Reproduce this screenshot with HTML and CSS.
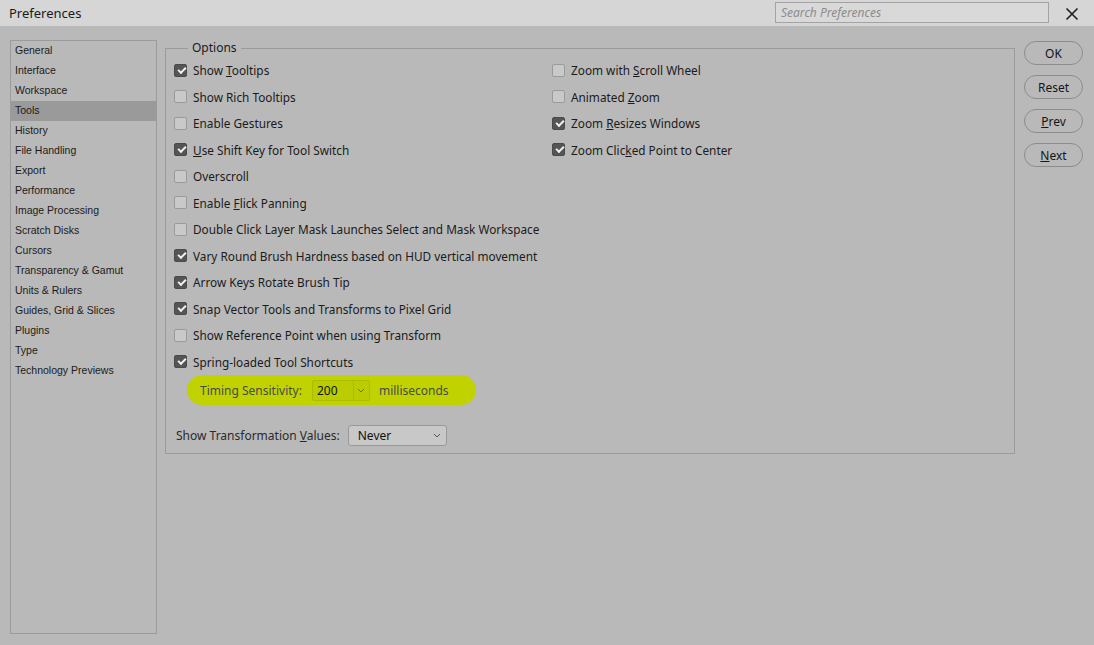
FILE: index.html
```html
<!DOCTYPE html>
<html>
<head>
<meta charset="utf-8">
<link rel="stylesheet" href="styles.css">
</head>
<body>
<div class="window">
  <div class="titlebar">
    <div class="title">Preferences</div>
    <div class="search">Search Preferences</div>
    <div class="close">
      <svg width="14" height="14" viewBox="0 0 14 14"><path d="M1.5 1.5 L12.5 12.5 M12.5 1.5 L1.5 12.5" stroke="#1e1e1e" stroke-width="1.6" fill="none"/></svg>
    </div>
  </div>
  <div class="main">
    <ul class="sidebar">
      <li>General</li>
      <li>Interface</li>
      <li>Workspace</li>
      <li class="selected">Tools</li>
      <li>History</li>
      <li>File Handling</li>
      <li>Export</li>
      <li>Performance</li>
      <li>Image Processing</li>
      <li>Scratch Disks</li>
      <li>Cursors</li>
      <li>Transparency &amp; Gamut</li>
      <li>Units &amp; Rulers</li>
      <li>Guides, Grid &amp; Slices</li>
      <li>Plugins</li>
      <li>Type</li>
      <li>Technology Previews</li>
    </ul>
    <fieldset class="options">
      <legend>Options</legend>
      <div class="cols">
        <div class="col">
          <div class="row"><span class="cb on"></span><span>Show <u>T</u>ooltips</span></div>
          <div class="row"><span class="cb"></span><span>Show Rich Tooltips</span></div>
          <div class="row"><span class="cb"></span><span>Enable Gestures</span></div>
          <div class="row"><span class="cb on"></span><span><u>U</u>se Shift Key for Tool Switch</span></div>
          <div class="row"><span class="cb"></span><span>Overscroll</span></div>
          <div class="row"><span class="cb"></span><span>Enable <u>F</u>lick Panning</span></div>
          <div class="row"><span class="cb"></span><span>Double Click Layer Mask Launches Select and Mask Workspace</span></div>
          <div class="row"><span class="cb on"></span><span>Vary Round Brush Hardness based on HUD vertical movement</span></div>
          <div class="row"><span class="cb on"></span><span>Arrow Keys Rotate Brush Tip</span></div>
          <div class="row"><span class="cb on"></span><span>Snap Vector Tools and Transforms to Pixel Grid</span></div>
          <div class="row"><span class="cb"></span><span>Show Reference Point when using Transform</span></div>
          <div class="row"><span class="cb on"></span><span>Spring-loaded Tool Shortcuts</span></div>
          <div class="timing">
            <span class="tlabel">Timing Sensitivity:</span>
            <span class="tinput"><span class="tval">200</span><span class="tarrow"><svg width="8" height="5" viewBox="0 0 8 5"><path d="M1 1 L4 4 L7 1" stroke="#6a7a00" stroke-width="1" fill="none"/></svg></span></span>
            <span class="tlabel">milliseconds</span>
          </div>
        </div>
        <div class="col">
          <div class="row"><span class="cb"></span><span>Zoom with <u>S</u>croll Wheel</span></div>
          <div class="row"><span class="cb"></span><span>Animated <u>Z</u>oom</span></div>
          <div class="row"><span class="cb on"></span><span>Zoom <u>R</u>esizes Windows</span></div>
          <div class="row"><span class="cb on"></span><span>Zoom Clic<u>k</u>ed Point to Center</span></div>
        </div>
      </div>
      <div class="transform">
        <span>Show Transformation <u>V</u>alues:</span>
        <span class="select"><span>Never</span><svg width="8" height="5" viewBox="0 0 8 5"><path d="M1 1 L4 4 L7 1" stroke="#555" stroke-width="1" fill="none"/></svg></span>
      </div>
    </fieldset>
    <div class="buttons">
      <div class="btn">OK</div>
      <div class="btn">Reset</div>
      <div class="btn"><span><u>P</u>rev</span></div>
      <div class="btn"><span><u>N</u>ext</span></div>
    </div>
  </div>
</div>
</body>
</html>
```
FILE: styles.css
```css
* { box-sizing: border-box; }
html, body { margin: 0; padding: 0; }
body {
  width: 1094px;
  height: 645px;
  background: #b9b9b9;
  font-family: "Noto Sans", "Open Sans", sans-serif;
  color: #1b1b1b;
  overflow: hidden;
}
.window { width: 1094px; height: 645px; display: flex; flex-direction: column; }
.titlebar {
  height: 26px;
  background: #d6d6d6;
  display: flex;
  align-items: center;
  padding-left: 9px;
}
.title { font-size: 13px; color: #1a1a1a; flex: 1; }
.search {
  width: 274px;
  height: 21px;
  margin-top: -2px;
  border: 1px solid #a3a3a3;
  background: #d9d9d9;
  font-size: 12px;
  font-style: italic;
  color: #8c8c8c;
  padding-left: 5px;
  line-height: 19px;
}
.close { width: 45px; display: flex; justify-content: center; align-items: center; padding-top: 1px; }
.main {
  flex: 1;
  display: flex;
  align-items: flex-start;
  padding: 14px 0 0 10px;
}
.sidebar {
  list-style: none;
  margin: 0;
  padding: 0;
  width: 147px;
  height: 594px;
  border: 1px solid #9b9b9b;
  font-family: "Liberation Sans", Arial, sans-serif;
  font-size: 10.5px;
  color: #1b1b1b;
}
.sidebar li { height: 20px; line-height: 18px; padding-left: 4px; }
.sidebar li.selected { background: #9a9a9a; }
.options {
  margin: 0 0 0 8px;
  width: 850px;
  border: 1px solid #9b9b9b;
  padding: 1px 8px 7px 8px;
}
.options legend {
  font-size: 12px;
  padding: 0 4px;
  margin-left: 14px;
  line-height: 16px;
  color: #1b1b1b;
}
.cols { display: grid; grid-template-columns: 378px 1fr; }
.row {
  height: 26.5px;
  display: flex;
  align-items: center;
  font-size: 11.8px;
  white-space: nowrap;
}
.cb {
  width: 13px;
  height: 13px;
  border: 1px solid #9a9a9a;
  border-radius: 2px;
  background: #c9c9c9;
  margin-right: 6px;
  flex: none;
  position: relative;
}
.cb.on { background: #555; border-color: #4a4a4a; }
.cb.on::after {
  content: "";
  position: absolute;
  left: 2.5px;
  top: 2px;
  width: 6px;
  height: 3px;
  border-left: 2px solid #f2f2f2;
  border-bottom: 2px solid #f2f2f2;
  transform: rotate(-45deg);
}
.timing {
  margin-left: 13px;
  width: 289px;
  height: 30px;
  border-radius: 15px;
  background: #c0d300;
  display: flex;
  align-items: center;
  padding-left: 13px;
  font-size: 12px;
}
.tlabel { color: #4a4a4a; }
.tinput {
  margin-left: 10px;
  margin-right: 9px;
  width: 58px;
  height: 21px;
  border: 1px solid #aabd00;
  border-radius: 2px;
  background: #bbcd00;
  display: flex;
  align-items: center;
}
.tval { flex: 1; padding-left: 4px; color: #111; }
.tarrow {
  width: 16px;
  height: 19px;
  border-left: 1px solid #aabd00;
  display: flex;
  align-items: center;
  justify-content: center;
}
.transform {
  margin-top: 20px;
  display: flex;
  align-items: center;
  font-size: 12px;
  color: #2a2a2a;
  padding-left: 2px;
}
.select {
  margin-left: 8px;
  width: 99px;
  height: 21px;
  border: 1px solid #999;
  border-radius: 3px;
  background: #c8c8c8;
  display: flex;
  align-items: center;
  justify-content: space-between;
  padding: 0 5px 0 9px;
  color: #111;
}
.buttons {
  margin-left: 9px;
  margin-top: 1px;
  display: flex;
  flex-direction: column;
  gap: 10px;
}
.btn {
  width: 59px;
  height: 24px;
  border: 1px solid #8c8c8c;
  border-radius: 12px;
  font-size: 12px;
  display: flex;
  align-items: center;
  justify-content: center;
  color: #151515;
}
```
